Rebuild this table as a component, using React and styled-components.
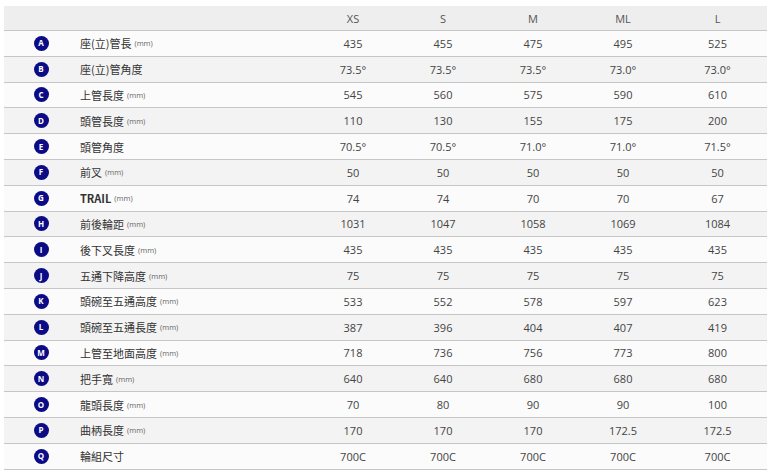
import React from "react";
import styled, { createGlobalStyle } from "styled-components";

const Global = createGlobalStyle`
  html, body { margin: 0; padding: 0; background: #ffffff; }
  body { font-family: "Open Sans", "Noto Sans CJK TC", sans-serif; }
`;

const Page = styled.div`
  padding: 6px 13px 0 4px;
`;

const Table = styled.div`
  width: 763px;
  display: grid;
  grid-template-columns: 74px 230px 90px 90px 90px 90px 99px;
`;

const Row = styled.div`
  display: contents;
`;

const Cell = styled.div`
  box-sizing: border-box;
  height: ${(p) => (p.$head ? "25px" : "25.8px")};
  display: flex;
  align-items: center;
  justify-content: ${(p) => (p.$align === "left" ? "flex-start" : "center")};
  padding-left: ${(p) => (p.$align === "left" ? "2px" : "0")};
  background: ${(p) => (p.$head ? "#eeeeee" : p.$alt ? "#f3f3f3" : "#fbfbfb")};
  border-bottom: 1px solid #c6c6c6;
  font-size: 11px;
  color: ${(p) => (p.$head ? "#555555" : "#444444")};
  white-space: nowrap;
`;

const Badge = styled.span`
  width: 15px;
  height: 15px;
  border-radius: 50%;
  background: #0b0b86;
  color: #ffffff;
  font-family: "Open Sans", sans-serif;
  font-weight: 700;
  font-size: 8px;
  display: flex;
  align-items: center;
  justify-content: center;
  line-height: 1;
`;

const Label = styled.span`
  font-family: "Noto Sans CJK TC", "Open Sans", sans-serif;
  font-size: 11px;
  color: #333333;
  font-weight: ${(p) => (p.$bold ? 700 : 400)};
`;

const Unit = styled.span`
  font-family: "Open Sans", sans-serif;
  font-size: 7.5px;
  color: #666666;
  margin-left: 3px;
`;

const sizes = ["XS", "S", "M", "ML", "L"];

const rows = [
  ["A", "座(立)管長", true, ["435", "455", "475", "495", "525"]],
  ["B", "座(立)管角度", false, ["73.5°", "73.5°", "73.5°", "73.0°", "73.0°"]],
  ["C", "上管長度", true, ["545", "560", "575", "590", "610"]],
  ["D", "頭管長度", true, ["110", "130", "155", "175", "200"]],
  ["E", "頭管角度", false, ["70.5°", "70.5°", "71.0°", "71.0°", "71.5°"]],
  ["F", "前叉", true, ["50", "50", "50", "50", "50"]],
  ["G", "TRAIL", true, ["74", "74", "70", "70", "67"], true],
  ["H", "前後輪距", true, ["1031", "1047", "1058", "1069", "1084"]],
  ["I", "後下叉長度", true, ["435", "435", "435", "435", "435"]],
  ["J", "五通下降高度", true, ["75", "75", "75", "75", "75"]],
  ["K", "頭碗至五通高度", true, ["533", "552", "578", "597", "623"]],
  ["L", "頭碗至五通長度", true, ["387", "396", "404", "407", "419"]],
  ["M", "上管至地面高度", true, ["718", "736", "756", "773", "800"]],
  ["N", "把手寬", true, ["640", "640", "680", "680", "680"]],
  ["O", "龍頭長度", true, ["70", "80", "90", "90", "100"]],
  ["P", "曲柄長度", true, ["170", "170", "170", "172.5", "172.5"]],
  ["Q", "輪組尺寸", false, ["700C", "700C", "700C", "700C", "700C"]],
];

export default function App() {
  return (
    <Page>
      <Global />
      <Table>
        <Row>
          <Cell $head />
          <Cell $head />
          {sizes.map((s) => (
            <Cell $head key={s}>{s}</Cell>
          ))}
        </Row>
        {rows.map(([letter, label, mm, values, bold], i) => {
          const alt = i % 2 === 1;
          return (
            <Row key={letter}>
              <Cell $alt={alt}>
                <Badge>{letter}</Badge>
              </Cell>
              <Cell $alt={alt} $align="left">
                <Label $bold={bold}>{label}</Label>
                {mm && <Unit>(mm)</Unit>}
              </Cell>
              {values.map((v, j) => (
                <Cell $alt={alt} key={j}>{v}</Cell>
              ))}
            </Row>
          );
        })}
      </Table>
    </Page>
  );
}
